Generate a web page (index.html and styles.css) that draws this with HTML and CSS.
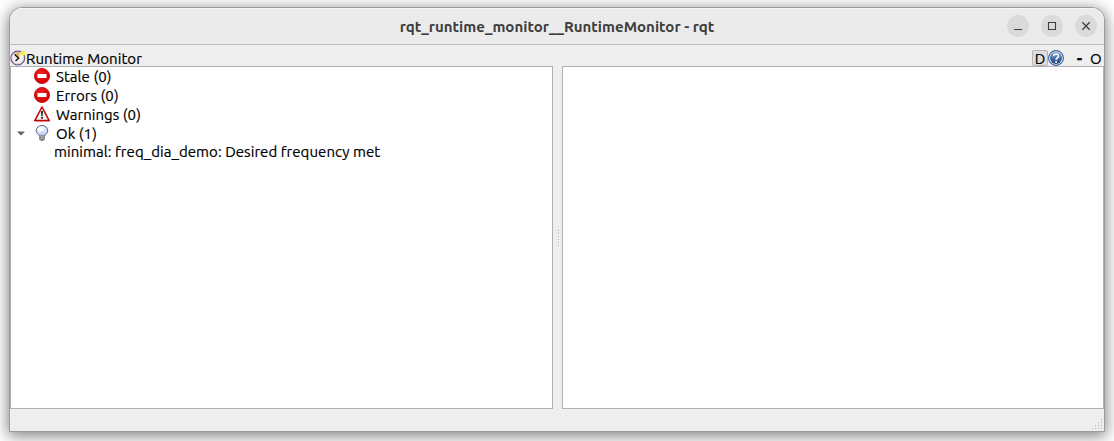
FILE: index.html
```html
<!DOCTYPE html>
<html lang="en">
<head>
<meta charset="utf-8">
<title>rqt_runtime_monitor__RuntimeMonitor - rqt</title>
<link rel="stylesheet" href="styles.css">
</head>
<body>
<svg class="defs" width="0" height="0">
  <defs>
    <radialGradient id="red" cx=".4" cy=".3" r=".8"><stop offset="0" stop-color="#ee2020"/><stop offset="1" stop-color="#cc0000"/></radialGradient>
    <linearGradient id="blue" x1="0" y1="0" x2="0" y2="1"><stop offset="0" stop-color="#7498c8"/><stop offset="1" stop-color="#1f4482"/></linearGradient>
    <radialGradient id="bulb" cx=".4" cy=".3" r=".75"><stop offset="0" stop-color="#fff"/><stop offset="1" stop-color="#b4cdf0"/></radialGradient>
    <g id="stop">
      <circle cx="8" cy="8" r="7.6" fill="url(#red)" stroke="#b80000" stroke-width=".8"/>
      <rect x="3.5" y="6" width="9" height="4" rx=".3" fill="#fff"/>
    </g>
  </defs>
</svg>
<main class="window">
  <header class="titlebar">
    <h1 class="title">rqt_runtime_monitor__RuntimeMonitor - rqt</h1>
    <div class="controls">
      <span class="control"><svg width="22" height="22"><path d="M7 14.5h8" stroke="#3d3d3d" fill="none"/></svg></span>
      <span class="control"><svg width="22" height="22"><path d="M7.5 7.5h7v7h-7z" stroke="#3d3d3d" fill="none" stroke-width="1.1"/></svg></span>
      <span class="control"><svg width="22" height="22"><path d="M7.3 7.3l7.4 7.4M14.7 7.3l-7.4 7.4" stroke="#3d3d3d" fill="none" stroke-width="1.3"/></svg></span>
    </div>
  </header>
  <div class="dockbar">
    <svg width="16" height="16" viewBox="0 0 16 16">
      <circle cx="7.8" cy="8" r="6.9" fill="#f4f2ee" stroke="#72508a" stroke-width="1.2"/>
      <circle cx="7.8" cy="8" r="5.9" fill="none" stroke="#c9bdd0" stroke-width=".7"/>
      <path d="M8 8L4.5 3.5A6 6 0 0 1 9.5 2.5L9.5 7z" fill="#d6b65c"/>
      <path d="M4.7 4.4L8.6 8.2L5.5 11" fill="none" stroke="#111" stroke-width="1.4"/>
      <path d="M13.3 0l.8 2 1.9-.4-1 1.9 1 1.7-2-.2-.8 1.8-.9-1.8-2 .2 1.2-1.7-1.1-1.8 2 .3z" fill="#f8ee35"/>
    </svg>
    <span class="dock-title">Runtime Monitor</span>
    <span class="dock-d">D</span>
    <svg class="help" width="16" height="16" viewBox="0 0 16 16">
      <circle cx="8" cy="8" r="7.4" fill="#f3f7fc" stroke="#3a5f98" stroke-width="1.1"/>
      <circle cx="8" cy="8" r="6" fill="url(#blue)"/>
      <path d="M5.6 6.3C5.6 3.3 10.6 3.4 10.5 6C10.5 7.8 8.1 7.7 8.1 9.8M8.1 11v1.7" fill="none" stroke="#fff" stroke-width="1.7"/>
    </svg>
    <span class="dock-min">-</span>
    <span class="dock-o">O</span>
  </div>
  <div class="splitter">
    <section class="pane tree">
      <div class="row"><svg width="16" height="16"><use href="#stop"/></svg><span>Stale (0)</span></div>
      <div class="row"><svg width="16" height="16"><use href="#stop"/></svg><span>Errors (0)</span></div>
      <div class="row">
        <svg width="16" height="16" viewBox="0 0 16 16">
          <path d="M8 1L15.2 14.6H.8z" fill="#f4f4f4" stroke="#c00a0a" stroke-width="1.6" stroke-linejoin="round"/>
          <path d="M7 5h2L8.6 10.2H7.4z" fill="#222"/><rect x="7.1" y="11" width="1.8" height="1.8" fill="#222"/>
        </svg><span>Warnings (0)</span>
      </div>
      <div class="row open">
        <svg class="arrow" width="8" height="5"><path d="M0 .5h8L4 4.5z" fill="#626262"/></svg>
        <svg width="16" height="16" viewBox="0 0 16 16">
          <path d="M5.6 11.2C5.4 9.6 2.2 8.8 2.2 5.8A5.8 5.4 0 0 1 13.8 5.8C13.8 8.8 10.6 9.6 10.4 11.2z" fill="url(#bulb)" stroke="#5c6b8e" stroke-width="1"/>
          <ellipse cx="6.6" cy="4.2" rx="2.8" ry="2.2" fill="#fff"/>
          <path d="M7 10.5V7.5l1-1 1 1v3" fill="none" stroke="#a9b8d2" stroke-width=".6"/>
          <rect x="5.8" y="11" width="4.4" height="3.6" fill="#e3e3d0" stroke="#666" stroke-width=".8"/>
          <path d="M5.6 12.8h4.8M6.6 15.3h2.8" stroke="#555" stroke-width=".9"/>
        </svg><span>Ok (1)</span>
      </div>
      <div class="row child"><span>minimal: freq_dia_demo: Desired frequency met</span></div>
    </section>
    <div class="handle"><i></i><i></i><i></i><i></i><i></i><i></i></div>
    <section class="pane"></section>
  </div>
  <footer class="statusbar">
    <svg width="12" height="12" fill="#b3b3b3"><path d="M9 0h1v1h-1zM9 3h1v1h-1zM9 6h1v1h-1zM9 9h1v1h-1zM6 3h1v1h-1zM6 6h1v1h-1zM6 9h1v1h-1zM3 6h1v1h-1zM3 9h1v1h-1zM0 9h1v1h-1z"/></svg>
  </footer>
</main>
</body>
</html>
```
FILE: styles.css
```css
* { box-sizing: border-box; }
body {
  margin: 0;
  height: 441px;
  overflow: hidden;
  padding: 7px 9px 9px;
  background: #fff;
  font: 15px/19px Ubuntu, "Noto Sans", sans-serif;
  letter-spacing: .058px;
  -webkit-text-stroke: .2px;
  color: #000;
}
svg { display: block; flex: none; }
.defs { position: absolute; }
.window {
  height: 425px;
  display: flex;
  flex-direction: column;
  border: 1px solid #9b9b9b;
  border-radius: 13px 13px 0 0;
  background: #eee;
  box-shadow: 0 3px 15px 1px rgba(0, 0, 0, .5);
  overflow: hidden;
}
.titlebar {
  height: 37px;
  flex: none;
  display: grid;
  grid-template-columns: 1fr auto 1fr;
  align-items: center;
  background: #ebebeb;
  border-bottom: 1px solid #bcbcbc;
  box-shadow: inset 0 1px #f7f7f7;
}
.title {
  grid-column: 2;
  margin: 0;
  font-size: 15px;
  font-weight: 700;
  letter-spacing: .03px;
  -webkit-text-stroke: 0;
  color: #3d3d3d;
  white-space: nowrap;
}
.controls { display: flex; justify-content: flex-end; gap: 12px; padding-right: 7px; }
.control { width: 22px; height: 22px; border-radius: 50%; background: #dadada; }
.dockbar { height: 21px; flex: none; display: flex; align-items: center; padding-top: 5px; }
.dock-title { margin-right: auto; }
.dock-d {
  width: 16px;
  height: 16px;
  line-height: 15px;
  text-align: center;
  border: 1px solid #b5b5b5;
  border-radius: 2px;
  background: #dedede;
}
.dock-min { margin-left: 13px; width: 6px; font-weight: 700; -webkit-text-stroke: .5px; }
.dock-o { margin-left: 7px; width: 14px; }
.splitter { height: 343px; display: flex; }
.pane { flex: 1; border: 1px solid #b0b0b0; background: #fff; }
.handle {
  width: 9px;
  display: flex;
  flex-direction: column;
  justify-content: center;
  align-items: center;
  gap: 2px;
  padding-left: 2px;
}
.handle i { width: 1px; height: 1px; background: #b0b0b0; box-shadow: 1px 1px #fff; }
.row {
  display: flex;
  align-items: center;
  height: 19px;
  gap: 6px;
  padding-left: 23px;
  white-space: nowrap;
}
.tree .row > svg:not(.arrow) { margin-top: -1px; }
.open { padding-left: 6px; }
.arrow { margin-right: 3px; }
.child { padding-left: 43px; height: 17px; }
.statusbar { flex: 1; display: flex; justify-content: flex-end; align-items: flex-end; }
```
